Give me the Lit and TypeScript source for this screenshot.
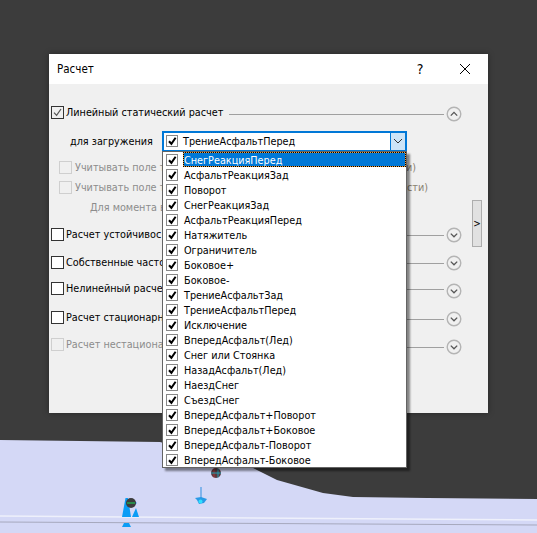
import { LitElement, html, css, svg } from 'lit';
import { customElement } from 'lit/decorators.js';

const LOADS = [
  'СнегРеакцияПеред', 'АсфальтРеакцияЗад', 'Поворот', 'СнегРеакцияЗад', 'АсфальтРеакцияПеред',
  'Натяжитель', 'Ограничитель', 'Боковое+', 'Боковое-', 'ТрениеАсфальтЗад', 'ТрениеАсфальтПеред',
  'Исключение', 'ВпередАсфальт(Лед)', 'Снег или Стоянка', 'НазадАсфальт(Лед)', 'НаездСнег', 'СъездСнег',
  'ВпередАсфальт+Поворот', 'ВпередАсфальт+Боковое', 'ВпередАсфальт-Поворот', 'ВпередАсфальт-Боковое',
];

// labels are cut where the open list covers them; lift = px the label sits above the row centre, doubled
const SECTIONS = [
  { label: 'Расчет устойчивос', lift: 2, lineLift: 0 },
  { label: 'Собственные часто', lift: 2, lineLift: 0 },
  { label: 'Нелинейный расче', lift: 6, lineLift: 4 },
  { label: 'Расчет стационарн', lift: 4, lineLift: 0 },
  { label: 'Расчет нестациона', lift: 6, lineLift: 0, disabled: true },
];

const check = svg`<path d="M2 5.2 L4.4 7.8 L8.6 1.8" fill="none" stroke="#000" stroke-width="2"/>`;
const thinCheck = svg`<path d="M2 5.6 L4.6 8.4 L9 2" fill="none" stroke="#555" stroke-width="1.2"/>`;

const chevron = (up: boolean) => html`
  <svg class="chev" width="16" height="16" viewBox="0 0 16 16">
    <circle cx="8" cy="8" r="6.8" fill="#f0f0f0" stroke="#b4b4b4" stroke-width="1.4"/>
    <path d=${up ? 'M4.8 9.6 L8 6.4 L11.2 9.6' : 'M4.8 6.6 L8 9.8 L11.2 6.6'} fill="none" stroke="#555" stroke-width="1.3"/>
  </svg>`;

@customElement('app-root')
export class AppRoot extends LitElement {
  static styles = css`
    :host {
      display: block;
      position: relative;
      width: 537px;
      height: 533px;
      overflow: hidden;
      background: #3c3c3c;
      font-family: "DejaVu Sans", sans-serif;
      font-stretch: condensed;
      font-size: 10.75px;
      color: #000;
    }
    .scene { position: absolute; left: 0; top: 0; }
    .dialog {
      position: absolute;
      left: 49px;
      top: 54px;
      width: 439px;
      height: 359px;
      background: #f0f0f0;
      box-shadow: 0 0 6px rgba(0, 0, 0, 0.35);
      display: flex;
      flex-direction: column;
    }
    .title {
      height: 30px;
      background: #fff;
      display: flex;
      align-items: center;
      padding-left: 8px;
      flex: none;
    }
    .title .name { flex: 1; font-size: 11.5px; }
    .title .help { width: 16px; text-align: center; font-size: 14px; margin-right: 31px; }
    .title svg { margin-right: 17px; }
    .body { padding: 16px 26px 0 2px; display: flex; flex-direction: column; }
    .row { display: flex; align-items: center; white-space: nowrap; }
    .section { height: 28px; }
    .box {
      width: 11px;
      height: 11px;
      border: 1px solid #333;
      background: #fff;
      margin-right: 2px;
      flex: none;
      display: block;
    }
    .box.off { border-color: #cfcfcf; background: #f0f0f0; }
    .box.tick { background: #f0f0f0; }
    .box.small { width: 10px; height: 10px; border-color: #888; margin-right: 5px; }
    .box svg { display: block; }
    .label { display: flex; align-items: center; }
    .line { flex: 1; height: 1px; background: #a0a0a0; margin: 0 2px 0 6px; }
    .chev { flex: none; margin-right: 0; }
    .grey { color: #8c8c8c; }
    .load { height: 26px; padding-left: 19px; margin-bottom: 3px; }
    .load-name { width: 92px; }
    .combo {
      width: 241px;
      height: 17px;
      border: 2px solid #0078d7;
      background: #fff;
      display: flex;
      align-items: center;
    }
    .combo .value { flex: 1; display: flex; align-items: center; padding-left: 2px; }
    .combo .arrow {
      width: 14px;
      height: 17px;
      background: #cce4f7;
      border-left: 1px solid #0078d7;
      display: flex;
      align-items: center;
      justify-content: center;
    }
    .opt { height: 20px; padding-left: 8px; justify-content: space-between; color: #8c8c8c; }
    .opt .box { margin-right: 3px; }
    .opt .side { color: #8a8272; }
    .opt1 { padding-right: 46px; }
    .opt2 { padding-right: 34px; }
    .moment { height: 20px; padding-left: 39px; color: #8c8c8c; margin-bottom: 4px; }
    .more {
      position: absolute;
      left: 423px;
      top: 146px;
      width: 8px;
      height: 45px;
      border: 1px solid #adadad;
      background: #e1e1e1;
      display: flex;
      align-items: center;
      justify-content: center;
      font-size: 10px;
    }
    .drop {
      position: absolute;
      left: 162px;
      top: 151px;
      width: 243px;
      background: #fff;
      border: 1px solid #646464;
      box-shadow: 3px 3px 2px rgba(0, 0, 0, 0.45);
    }
    .item { height: 15px; display: flex; align-items: center; padding-left: 3px; }
    .item .text {
      flex: 1;
      height: 15px;
      line-height: 17px;
      padding-left: 1px;
      box-sizing: border-box;
    }
    .item.sel .text {
      background: #0078d7;
      color: #fff;
      outline: 1px dotted #000;
      outline-offset: -1px;
      box-shadow: inset 0 0 0 1px #f2a03c;
    }
  `;

  private box(cls = '', tick = check) {
    return html`<span class="box ${cls}">
      ${tick ? html`<svg width="11" height="11" viewBox="0 0 11 11">${tick}</svg>` : ''}
    </span>`;
  }

  private scene() {
    return html`<svg class="scene" width="537" height="533" viewBox="0 0 537 533">
      <path d="M0 440 L160 442 L253 468 L277 480 L323 493 L353 497 L427 498 L537 499 L537 533 L0 533 Z" fill="#d4d8f6"/>
      <path d="M0 516 L537 520" stroke="#eef0fb" stroke-width="1.5"/>
      <path d="M0 522 L537 525" stroke="#a6a8bd" stroke-width="1"/>
      <circle cx="216" cy="473" r="5" fill="#5a3a40"/>
      <path d="M214 468.500 V477.500" stroke="#a33" stroke-width="1"/>
      <path d="M218 468.500 V477.500 M211 473 H221" stroke="#1f9fb0" stroke-width="1"/>
      <path d="M201 487 V498" stroke="#2f8fe0" stroke-width="1"/>
      <path d="M195 498 L201 497 L207 499 L204 503 L199 504 L197 500 Z" fill="#2a9ae6"/>
      <circle cx="200.500" cy="501.500" r="2" fill="#2fe0ff"/>
      <path d="M125.500 498 L128 498 L131 517 L122 517 Z M133 500 L137 503 L134 505 Z M136 508 L132 517 L139 517 Z M122 527 L131 527 L129 523 L124 523 Z" fill="#0b9cf5"/>
      <circle cx="131" cy="503" r="5" fill="#3c3c3c"/>
      <path d="M127 503 H135" stroke="#2a8a4a" stroke-width="2"/>
    </svg>`;
  }

  render() {
    return html`
      ${this.scene()}
      <div class="dialog">
        <div class="title">
          <span class="name">Расчет</span>
          <span class="help">?</span>
          <svg width="12" height="12" viewBox="0 0 12 12"><path d="M1 1 L11 11 M11 1 L1 11" stroke="#000" stroke-width="1"/></svg>
        </div>
        <div class="body">
          <div class="row section">
            <span class="label" style="padding-bottom:4px">${this.box('tick', thinCheck)}Линейный статический расчет</span>
            <span class="line"></span>${chevron(true)}
          </div>
          <div class="row load">
            <span class="load-name">для загружения</span>
            <div class="combo">
              <div class="value">${this.box('small')}ТрениеАсфальтПеред</div>
              <div class="arrow">
                <svg width="10" height="6" viewBox="0 0 10 6"><path d="M1 1 L5 5 L9 1" fill="none" stroke="#333" stroke-width="1"/></svg>
              </div>
            </div>
          </div>
          <div class="row opt opt1">
            <span class="label">${this.box('off', null)}Учитывать поле т</span>
            <span class="side">и)</span>
          </div>
          <div class="row opt opt2">
            <span class="label">${this.box('off', null)}Учитывать поле т</span>
            <span class="side">сти)</span>
          </div>
          <div class="row moment">Для момента в</div>
          ${SECTIONS.map(s => html`
            <div class="row section ${s.disabled ? 'grey' : ''}">
              <span class="label" style="padding-bottom:${s.lift}px">${this.box(s.disabled ? 'off' : '', null)}${s.label}</span>
              <span class="line" style="margin-bottom:${s.lineLift}px"></span>${chevron(false)}
            </div>`)}
        </div>
        <div class="more">&gt;</div>
      </div>
      <div class="drop">
        ${LOADS.map((name, i) => html`
          <div class="item ${i === 0 ? 'sel' : ''}">
            ${this.box('small')}
            <span class="text">${name}</span>
          </div>`)}
      </div>
    `;
  }
}
